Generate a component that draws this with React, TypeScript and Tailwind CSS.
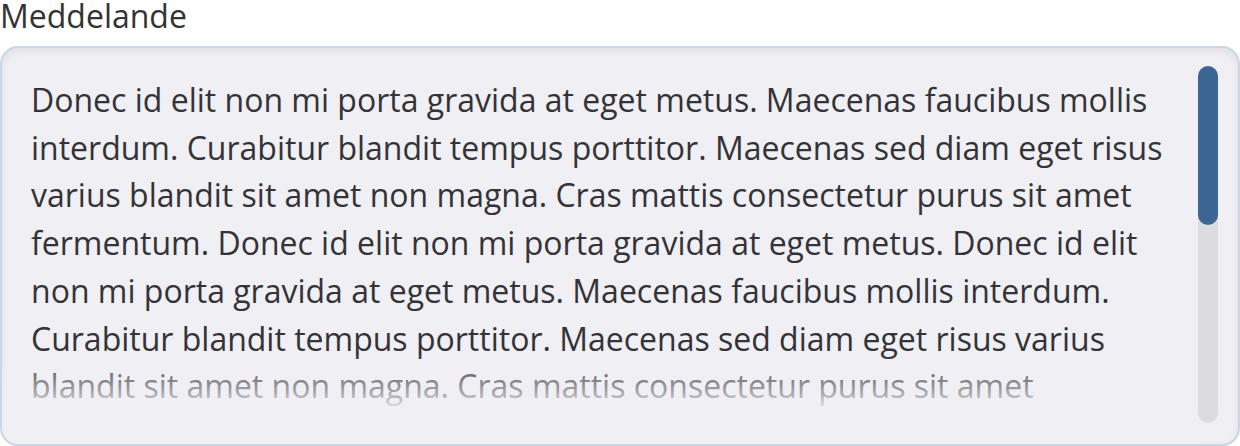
export default function App() {
  const text =
    'Donec id elit non mi porta gravida at eget metus. Maecenas faucibus mollis interdum. Curabitur blandit tempus porttitor. Maecenas sed diam eget risus varius blandit sit amet non magna. Cras mattis consectetur purus sit amet fermentum. Donec id elit non mi porta gravida at eget metus. Donec id elit non mi porta gravida at eget metus. Maecenas faucibus mollis interdum. Curabitur blandit tempus porttitor. Maecenas sed diam eget risus varius blandit sit amet non magna. Cras mattis consectetur purus sit amet fermentum.';

  return (
    <div className="w-[1240px] h-[446px] bg-white font-['Open_Sans',sans-serif] text-[#333333] overflow-hidden">
      <label className="block text-[32px] leading-[28px] h-[46px] pt-[2px]">Meddelande</label>
      <div className="relative flex h-[400px] rounded-[18px] border-2 border-[#c9d6e3] bg-[#f0eff4] shadow-[inset_0_3px_8px_rgba(0,0,0,0.07)] overflow-hidden">
        <div className="relative flex-1 pl-[29px] pt-[28px] pr-[14px] overflow-hidden">
          <p className="text-[32px] leading-[47.7px] text-[#333338]">{text}</p>
          <div className="absolute left-0 right-0 top-[306px] bottom-0 bg-gradient-to-b from-[#f0eff4]/0 via-[#f0eff4]/65 via-45% to-[#f0eff4] to-65%" />
        </div>
        <div className="w-[40px] shrink-0 pt-[18px] pb-[21px] pr-[20px]">
          <div className="h-full w-[20px] rounded-full bg-[#dcdbe0]">
            <div className="h-[159px] w-[20px] rounded-full bg-[#3b6592]" />
          </div>
        </div>
      </div>
    </div>
  );
}
